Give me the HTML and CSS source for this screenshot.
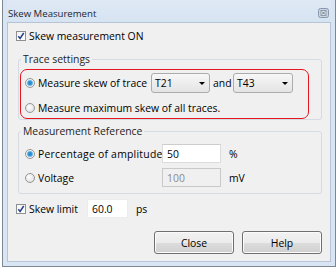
FILE: index.html
```html
<!DOCTYPE html>
<html lang="en">
<head>
	<meta charset="UTF-8">
	<title>Skew Measurement</title>
	<link rel="stylesheet" href="styles.css">
</head>
<body>
	<div class="window">
		<div class="titlebar">
			<span class="title">Skew Measurement</span>
			<span class="close-btn">
				<svg width="11" height="10" viewBox="0 0 11 10">
					<rect x="0.5" y="0.5" width="10" height="9" rx="2" fill="#c9d5e3" stroke="#8797ab"/>
					<rect x="3" y="2.5" width="5" height="5" fill="#e9eef4" stroke="#7d8a99" stroke-width="0.8"/>
					<path d="M4 3.5l3 3M7 3.5l-3 3" stroke="#5b6673" stroke-width="0.9"/>
				</svg>
			</span>
		</div>
		<div class="panel">
			<div class="check-row">
				<span class="checkbox">
					<svg width="8" height="8" viewBox="0 0 8 8"><path d="M1.3 4.2l1.8 2.2 3.6-5.4" fill="none" stroke="#23418f" stroke-width="1.5"/></svg>
				</span>
				<span>Skew measurement ON</span>
			</div>

			<fieldset class="group group-trace">
				<legend>Trace settings</legend>
				<div class="highlight">
					<div class="row row-pick">
						<span class="radio on"></span>
						<span class="label label-trace">Measure skew of trace</span>
						<div class="combo"><span>T21</span><span class="arrow"></span></div>
						<span class="and">and</span>
						<div class="combo combo-wide"><span>T43</span><span class="arrow"></span></div>
					</div>
					<div class="row row-max">
						<span class="radio"></span>
						<span class="label">Measure maximum skew of all traces.</span>
					</div>
				</div>
			</fieldset>

			<fieldset class="group group-ref">
				<legend>Measurement Reference</legend>
				<div class="ref-body">
					<div class="row field-row">
						<span class="radio on"></span>
						<span class="label label-ref label-clipped">Percentage of amplitude</span>
						<span class="textbox">50</span>
						<span class="unit">%</span>
					</div>
					<div class="row field-row">
						<span class="radio"></span>
						<span class="label label-ref">Voltage</span>
						<span class="textbox disabled">100</span>
						<span class="unit">mV</span>
					</div>
				</div>
			</fieldset>

			<div class="row limit-row">
				<span class="checkbox">
					<svg width="8" height="8" viewBox="0 0 8 8"><path d="M1.3 4.2l1.8 2.2 3.6-5.4" fill="none" stroke="#23418f" stroke-width="1.5"/></svg>
				</span>
				<span class="label label-limit">Skew limit</span>
				<span class="textbox small">60.0</span>
				<span class="unit">ps</span>
			</div>

			<div class="buttons">
				<button class="btn">Close</button>
				<button class="btn">Help</button>
			</div>
		</div>
	</div>
</body>
</html>
```

FILE: styles.css
```css
* {
	box-sizing: border-box;
}

body {
	margin: 0;
	background-color: #fff;
	font-family: 'Open Sans', 'Noto Sans', sans-serif;
	font-size: 10.4px;
	color: #000;
}

.window {
	width: 334px;
	margin-left: 2px;
	padding: 0 4px 4px;
	background-color: #d9e5f2;
	border: 1px solid #7b8896;
	border-top: none;
}

.titlebar {
	display: flex;
	align-items: flex-start;
	height: 22px;
	background: linear-gradient(#dfe9f5, #d6e3f1);
}

.title {
	margin-top: 6px;
	padding-left: 1px;
	font-size: 9.6px;
	line-height: 16px;
	color: #1c2633;
}

.close-btn {
	display: flex;
	margin: 8px 2px 0 auto;
}

.panel {
	background-color: #f0f0f0;
	border: 1px solid #b5c5d7;
	padding: 5px 8px 7px;
}

.check-row,
.row {
	display: flex;
	align-items: center;
}

.check-row {
	height: 16px;
}

.checkbox {
	display: flex;
	align-items: center;
	justify-content: center;
	width: 10px;
	height: 10px;
	margin-right: 3px;
	border: 1px solid #8e8f8f;
	background: linear-gradient(#f4f4f4, #ffffff);
	flex-shrink: 0;
}

.radio {
	width: 10px;
	height: 10px;
	margin-right: 3px;
	border: 1px solid #969696;
	border-radius: 50%;
	background: radial-gradient(circle at 40% 40%, #ffffff, #d6d6d6);
	flex-shrink: 0;
}

.radio.on {
	background: radial-gradient(circle, #1c7fc4 0, #3c9ad8 2px, #9fd0ef 3px, #f4f4f4 3.6px, #dcdcdc 100%);
}

.group {
	margin: 0 0 0 2px;
	padding: 0;
	border: 1px solid #d5dbe0;
	border-radius: 3px;
}

.group legend {
	margin-left: 2px;
	padding: 0 2px;
	line-height: 16px;
	color: #1e1e1e;
}

.group-trace {
	margin-top: 7px;
}

.highlight {
	margin: 2px 12px 0 1px;
	padding: 3px 4px 2px;
	border: 1px solid #e5161d;
	border-radius: 7px;
}

.row-pick {
	height: 20px;
}

.row-max {
	height: 16px;
	margin-top: 7px;
}

.label {
	white-space: nowrap;
}

.label-trace {
	width: 113px;
}

.combo {
	display: flex;
	align-items: center;
	width: 59px;
	height: 20px;
	padding-left: 3px;
	border: 1px solid #acacac;
	border-radius: 3px;
	background: linear-gradient(#f7f7f7, #e4e4e4);
}

.combo-wide {
	width: 60px;
}

.arrow {
	margin: 0 4px 0 auto;
	border-left: 3px solid transparent;
	border-right: 3px solid transparent;
	border-top: 3px solid #000;
}

.and {
	width: 23px;
	padding-left: 3px;
}

.group-ref {
	margin-top: 3px;
}

.ref-body {
	padding: 5px 0 6px 6px;
}

.field-row {
	height: 19px;
}

.field-row + .field-row {
	margin-top: 5px;
}

.label-ref {
	width: 124px;
	overflow: hidden;
}

/* the real label is wider than its slot, so it gets cut */
.label-clipped {
	letter-spacing: 0.25px;
}

.textbox {
	display: flex;
	align-items: center;
	width: 59px;
	height: 19px;
	padding-left: 4px;
	background-color: #fff;
	border: 1px solid #dcdcdc;
	border-top-color: #cdcdcd;
}

.textbox.disabled {
	background-color: #f0f0f0;
	border-color: #c9c9c9;
	color: #8a8a8a;
}

.textbox.small {
	width: 41px;
	border-color: #ececec;
}

.unit {
	margin-left: 8px;
}

.limit-row {
	height: 19px;
	margin-top: 5px;
}

.label-limit {
	width: 58px;
}

.buttons {
	display: flex;
	justify-content: flex-end;
	gap: 8px;
	margin-top: 13px;
}

.btn {
	width: 80px;
	height: 23px;
	padding: 0;
	font-family: inherit;
	font-size: 10.4px;
	color: #000;
	border: 1px solid #707070;
	border-radius: 3px;
	background: linear-gradient(#f2f2f2 0%, #ebebeb 50%, #dddddd 51%, #cfcfcf 100%);
	box-shadow: inset 0 0 0 1px #fbfbfb;
}
```
